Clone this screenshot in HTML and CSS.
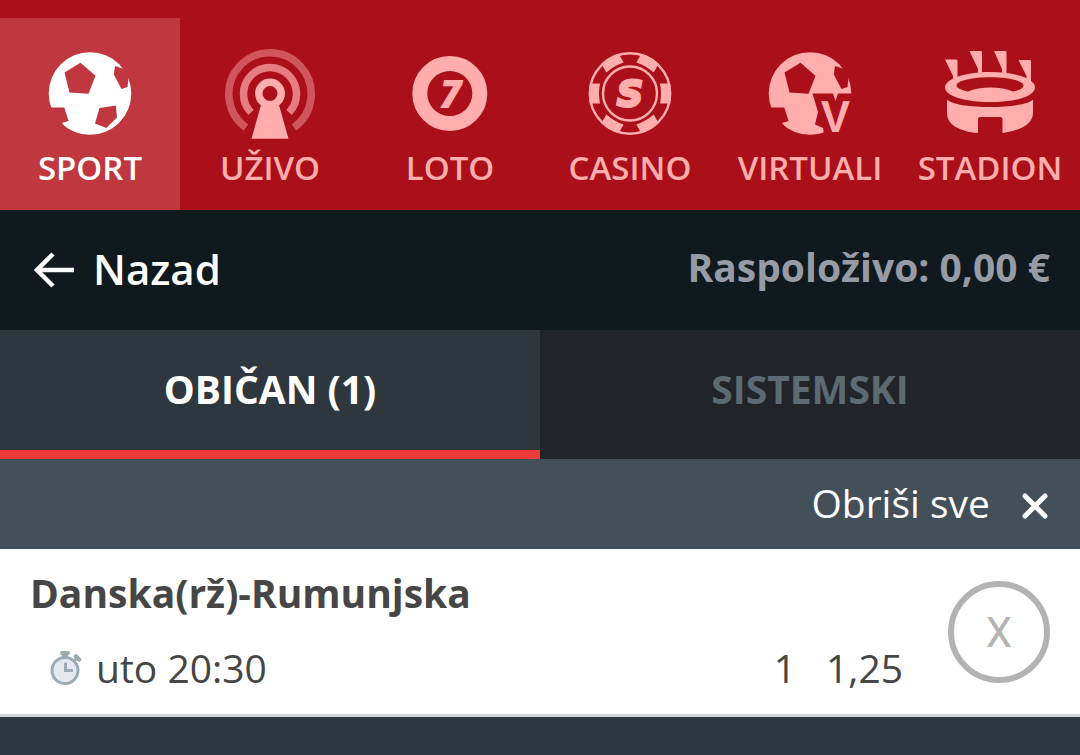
FILE: index.html
```html
<!DOCTYPE html>
<html lang="hr">
<head>
<meta charset="utf-8">
<meta name="viewport" content="width=device-width, initial-scale=1">
<title>Listić</title>
<link rel="stylesheet" href="styles.css">
</head>
<body>
<nav class="main-nav">
  <a class="nav-item active" href="#sport">
    <svg class="nav-icon" viewBox="0 0 100 100" aria-hidden="true">
      <defs>
        <mask id="ball-mask">
          <circle cx="50" cy="53.500" r="41.300" fill="#fff"/>
          <path d="M40.500 22.700L55.500 35.700L48.500 53.700L29.500 52.500L24.500 32.500Z" fill="#000"/>
          <path d="M59.500 68L75.800 65.600L77 77.500L66.300 88L55 83.500Z" fill="#000"/>
          <path d="M5 67.500H24.300L28.600 81L22 83L24 86L5 86Z" fill="#000"/>
          <path d="M75 26L83.500 28.700L100 20V45L88.500 38L87.500 47L81.500 49L73.800 34.500Z" fill="#000"/>
        </mask>
      </defs>
      <rect width="100" height="100" fill="currentColor" mask="url(#ball-mask)"/>
    </svg>
    <span>SPORT</span>
  </a>
  <a class="nav-item" href="#uzivo">
    <svg class="nav-icon" viewBox="0 0 100 100" aria-hidden="true">
      <g fill="none" stroke="currentColor" stroke-width="7.500">
        <path d="M26 87.500A41.200 41.200 0 1 1 74 87.500" opacity=".45"/>
        <path d="M31 72.500A26.500 26.500 0 1 1 69 72.500" opacity=".7"/>
        <circle cx="50" cy="53.500" r="11.200"/>
      </g>
      <path d="M41 65Q50 70.500 59 65L68.500 98.700H31.500Z" fill="currentColor"/>
    </svg>
    <span>UŽIVO</span>
  </a>
  <a class="nav-item" href="#loto">
    <svg class="nav-icon" viewBox="0 0 100 100" aria-hidden="true">
      <circle cx="49.800" cy="53.500" r="30" fill="none" stroke="currentColor" stroke-width="15"/>
      <text class="glyph-seven" x="50.500" y="68" text-anchor="middle">7</text>
    </svg>
    <span>LOTO</span>
  </a>
  <a class="nav-item" href="#casino">
    <svg class="nav-icon" viewBox="0 0 100 100" aria-hidden="true">
      <g fill="none" stroke="currentColor">
        <circle cx="50" cy="53.500" r="40.200" stroke-width="2.400"/>
        <circle cx="50" cy="53.500" r="27" stroke-width="2.400"/>
      </g>
      <g fill="currentColor">
        <path id="chip" d="M10 43.500H20Q18 53.500 20 63.500H10Q8 53.500 10 43.500Z"/>
        <use href="#chip" transform="rotate(60 50 53.500)"/>
        <use href="#chip" transform="rotate(120 50 53.500)"/>
        <use href="#chip" transform="rotate(180 50 53.500)"/>
        <use href="#chip" transform="rotate(240 50 53.500)"/>
        <use href="#chip" transform="rotate(300 50 53.500)"/>
      </g>
      <text class="glyph-s" x="50" y="66" text-anchor="middle">S</text>
    </svg>
    <span>CASINO</span>
  </a>
  <a class="nav-item" href="#virtuali">
    <svg class="nav-icon" viewBox="0 0 100 100" aria-hidden="true">
      <defs>
        <mask id="virtual-mask">
          <circle cx="50" cy="53.500" r="41.300" fill="#fff"/>
          <path d="M40.500 22.700L55.500 35.700L48.500 53.700L29.500 52.500L24.500 32.500Z" fill="#000"/>
          <path d="M5 67.500H24.300L28.600 81L22 83L24 86L5 86Z" fill="#000"/>
          <path d="M75 26L83.500 28.700L100 20V45L88.500 38L87.500 47L81.500 49L73.800 34.500Z" fill="#000"/>
          <path d="M52.500 53.500H73L75.500 61L78 53.500H100V100H65L63 88L55 84.500L58 72Z" fill="#000"/>
        </mask>
      </defs>
      <rect width="100" height="100" fill="currentColor" mask="url(#virtual-mask)"/>
      <text class="glyph-v" x="75.500" y="92" text-anchor="middle">V</text>
    </svg>
    <span>VIRTUALI</span>
  </a>
  <a class="nav-item" href="#stadion">
    <svg class="nav-icon" viewBox="0 0 100 100" aria-hidden="true">
      <g fill="currentColor">
        <path d="M5 19.500H16.500Q17.500 19.500 17.500 21V39H13V36Z"/>
        <path d="M29.500 11H41Q42 11 42 12.500V34H38V29Z"/>
        <path d="M54 11H65.500Q66.500 11 66.500 12.500V34H62V29Z"/>
        <path d="M78.500 20H90Q91 20 91 21.500V41H86.500V36Z"/>
        <path fill-rule="evenodd" d="M50 32C75 32 95 38.500 95 47.500S75 62 50 62S5 56 5 47.500S25 32 50 32ZM28 51.500C40 46 61 46 73 51.500C80 50 83.500 48 83.500 45.500C83.500 41 69 37.300 50 37.300S16.500 41 16.500 45.500C16.500 48 21 50 28 51.500Z"/>
        <path d="M7 59.500C16 69.500 84 69.500 93 59.500V73C93 85 78 91 62.500 93V79.500Q62.500 77 60 77H40.500Q38 77 38 79.500V93C20 91.500 7 85 7 73Z"/>
      </g>
    </svg>
    <span>STADION</span>
  </a>
</nav>

<header class="account-bar">
  <button class="back" type="button">
    <svg class="back-icon" viewBox="0 0 40 36" aria-hidden="true">
      <path d="M19 2L3 18L19 34M3 18H40" fill="none" stroke="currentColor" stroke-width="4.500"/>
    </svg>
    <span class="back-label">Nazad</span>
  </button>
  <p class="balance">Raspoloživo: 0,00 €</p>
</header>

<div class="ticket-tabs" role="tablist">
  <button class="ticket-tab selected" type="button" role="tab" aria-selected="true">OBIČAN (1)</button>
  <button class="ticket-tab" type="button" role="tab" aria-selected="false">SISTEMSKI</button>
</div>

<main>
  <div class="clear-bar">
    <button class="clear" type="button">
      <span class="clear-label">Obriši sve</span>
      <svg class="clear-icon" viewBox="0 0 26 26" aria-hidden="true">
        <path d="M3 3L23 23M23 3L3 23" stroke="currentColor" stroke-width="5" stroke-linecap="round"/>
      </svg>
    </button>
  </div>
  <article class="match">
    <div class="match-info">
      <h2 class="match-name">Danska(rž)-Rumunjska</h2>
      <div class="match-row">
        <svg class="watch" viewBox="0 0 32 36" aria-hidden="true">
          <path d="M24 11L28 7" stroke="#9aabb3" stroke-width="3"/>
          <path d="M26 6.500L29 9.500" stroke="#9aabb3" stroke-width="4.500" stroke-linecap="round"/>
          <rect x="10" y="1" width="10" height="4" rx="2" fill="#9aabb3"/>
          <rect x="12" y="4" width="6" height="4" fill="#9aabb3"/>
          <circle cx="15" cy="20.500" r="13" fill="#e2eaef" stroke="#9aabb3" stroke-width="3"/>
          <path d="M15.500 12.500V20.500H23" fill="none" stroke="#9aabb3" stroke-width="3"/>
        </svg>
        <span class="kickoff">uto 20:30</span>
        <span>1</span>
        <span class="odds">1,25</span>
      </div>
    </div>
    <button class="remove" type="button" aria-label="Ukloni">X</button>
  </article>
</main>
</body>
</html>
```
FILE: styles.css
```css
* {
  box-sizing: border-box;
}

body {
  margin: 0;
  background: #2d373d;
  color: #464646;
  font-family: "Open Sans", "Noto Sans", sans-serif;
  font-size: 39px;
}

button {
  margin: 0;
  padding: 0;
  border: 0;
  background: none;
  color: inherit;
  font: inherit;
  cursor: pointer;
}

.main-nav {
  display: grid;
  grid-template-columns: repeat(6, 1fr);
  padding-top: 18px;
  background: #ab101a;
}

.nav-item {
  display: flex;
  flex-direction: column;
  align-items: center;
  padding: 22px 0 22px;
  color: #ffadad;
  font-size: 33px;
  font-weight: 600;
  line-height: 40px;
  text-decoration: none;
}

.nav-item.active {
  background: #c13740;
  color: #fff;
}

.nav-icon {
  width: 100px;
  height: 100px;
  margin-bottom: 8px;
}

.nav-icon text {
  fill: currentColor;
}

.glyph-seven {
  font: italic 800 38px "Open Sans", sans-serif;
}

.glyph-s {
  font: italic 700 36px "DejaVu Sans", sans-serif;
  stroke: currentColor;
  stroke-width: 3px;
}

.glyph-v {
  font: 700 44px "Liberation Sans", sans-serif;
}

.account-bar {
  display: flex;
  justify-content: space-between;
  align-items: center;
  height: 120px;
  padding: 0 30px 0 34px;
  background: #0f191e;
}

.back {
  display: flex;
  align-items: center;
  gap: 19px;
  color: #fff;
  font-size: 42px;
  font-weight: 600;
}

.back-label,
.clear-label {
  padding-bottom: 4px;
}

.back-icon {
  width: 40px;
  height: 36px;
}

.balance {
  margin: 0 0 8px;
  color: #969ba5;
  font-weight: 700;
}

.ticket-tabs {
  display: grid;
  grid-template-columns: 1fr 1fr;
}

.ticket-tab {
  height: 129px;
  padding-bottom: 4px;
  border-bottom: 9px solid #212529;
  background: #212529;
  color: #5c6a74;
  font-weight: 700;
}

.ticket-tab.selected {
  border-color: #ef3a38;
  background: #2d373d;
  color: #fff;
}

.clear-bar {
  display: flex;
  justify-content: flex-end;
  height: 90px;
  padding: 0 32px;
  background: #434f59;
}

.clear {
  display: flex;
  align-items: center;
  gap: 32px;
  color: #fff;
}

.clear-icon {
  width: 26px;
  height: 26px;
  margin-top: 4px;
}

.match {
  display: flex;
  align-items: center;
  gap: 45px;
  padding: 14px 30px 16px 30px;
  border-bottom: 3px solid #d0d4d6;
  background: #fff;
}

.match-info {
  flex: 1;
}

.match-name {
  margin: 0 0 15px;
  font-size: 39px;
  line-height: 60px;
}

.match-row {
  display: flex;
  align-items: center;
  padding-left: 20px;
  line-height: 60px;
}

.watch {
  width: 32px;
  height: 36px;
  margin-right: 14px;
}

.kickoff {
  flex: 1;
}

.odds {
  margin-left: 30px;
}

.remove {
  width: 102px;
  height: 102px;
  margin-top: 2px;
  padding-top: 2px;
  border: 6px solid #b3b3b3;
  border-radius: 50%;
  color: #b3b3b3;
  font: 42px Roboto, sans-serif;
}
```
